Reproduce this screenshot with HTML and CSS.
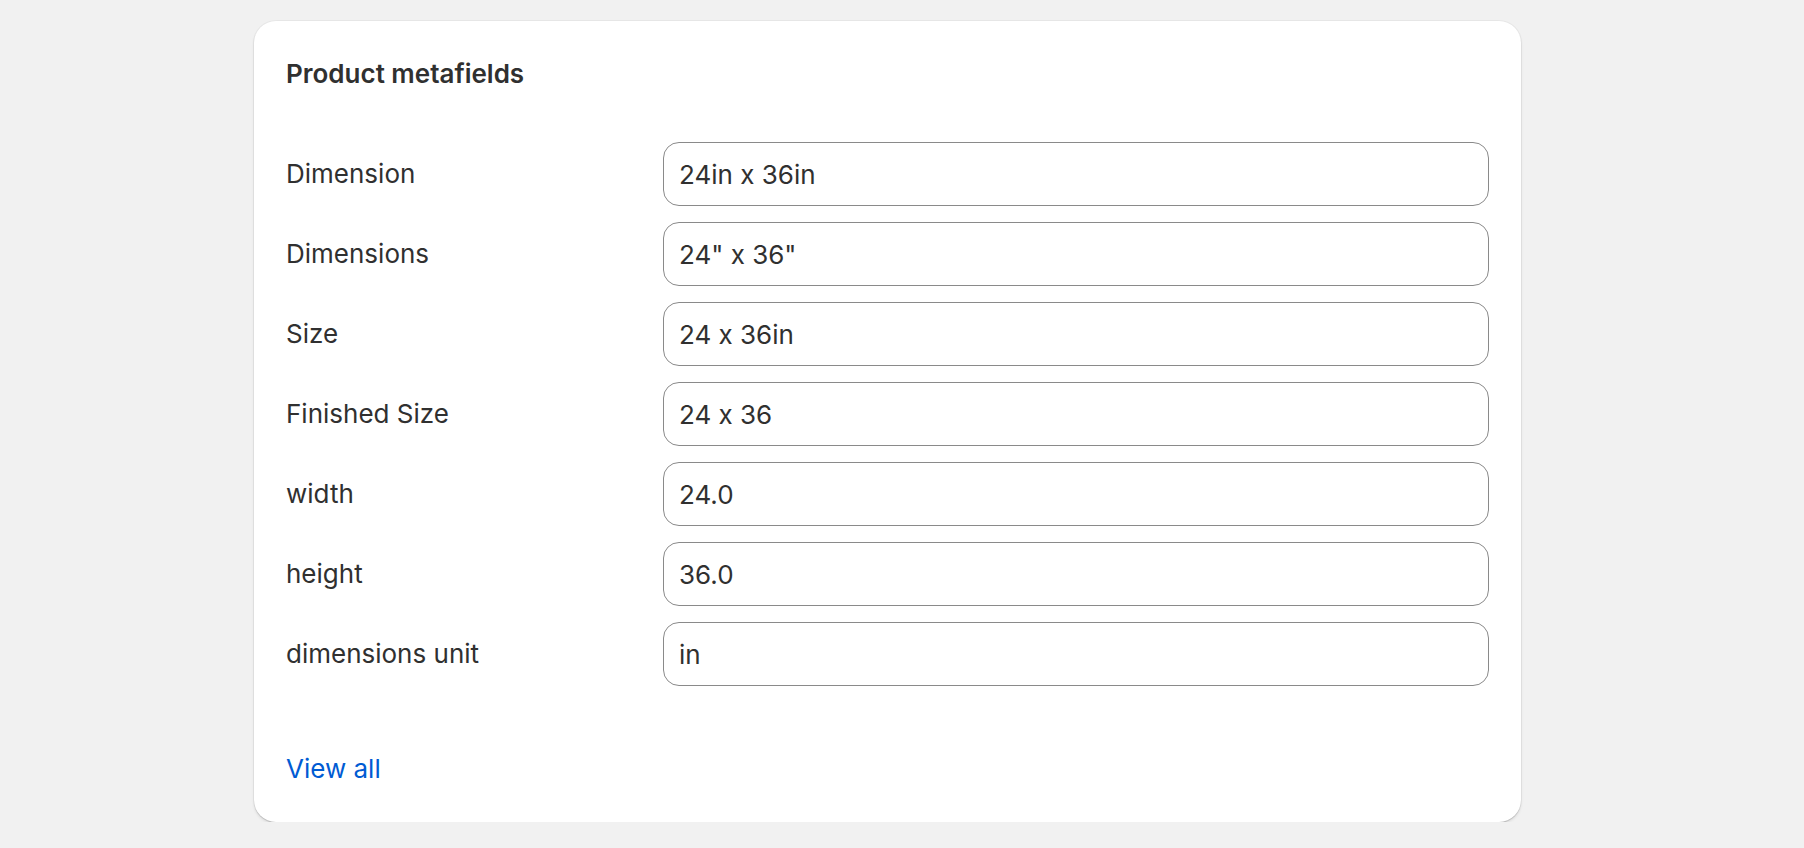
FILE: index.html
```html
<!DOCTYPE html>
<html>
<head>
<meta charset="utf-8">
<link rel="stylesheet" href="styles.css">
</head>
<body>
<div class="page">
  <section class="card">
    <h2 class="card-title">Product metafields</h2>
    <div class="fields">
      <div class="field"><span class="label">Dimension</span><div class="input">24in x 36in</div></div>
      <div class="field"><span class="label">Dimensions</span><div class="input">24" x 36"</div></div>
      <div class="field"><span class="label">Size</span><div class="input">24 x 36in</div></div>
      <div class="field"><span class="label">Finished Size</span><div class="input">24 x 36</div></div>
      <div class="field"><span class="label">width</span><div class="input">24.0</div></div>
      <div class="field"><span class="label">height</span><div class="input">36.0</div></div>
      <div class="field"><span class="label">dimensions unit</span><div class="input">in</div></div>
    </div>
    <a class="view-all" href="#">View all</a>
  </section>
</div>
</body>
</html>
```

FILE: styles.css
```css
html, body {
  margin: 0;
  padding: 0;
  background: #f1f1f1;
}
body {
  font-family: Inter, "Noto Sans", sans-serif;
  font-feature-settings: "calt" 0;
  color: #303030;
  font-size: 26px;
}
.page {
  padding: 21px 0 0 254px;
}
.card {
  width: 1267px;
  box-sizing: border-box;
  background: #ffffff;
  border-radius: 22px;
  padding: 33px 32px 33px 32px;
  box-shadow: 0 0 0 1px rgba(0, 0, 0, 0.04), 0 1px 0 0 rgba(0, 0, 0, 0.1), 0 2px 3px rgba(0, 0, 0, 0.1);
  display: flex;
  flex-direction: column;
}
.card-title {
  margin: 0 0 48px 0;
  font-size: 26px;
  line-height: 40px;
  font-weight: 600;
  color: #303030;
}
.fields {
  display: flex;
  flex-direction: column;
  gap: 16px;
}
.field {
  display: grid;
  grid-template-columns: 377px 1fr;
  align-items: center;
}
.label {
  font-size: 26px;
  line-height: 40px;
}
.input {
  height: 64px;
  box-sizing: border-box;
  border: 1px solid #8a8a8a;
  border-radius: 16px;
  padding: 0 15px;
  display: flex;
  align-items: center;
  font-size: 26px;
  color: #303030;
}
.view-all {
  margin-top: 63px;
  align-self: flex-start;
  font-size: 26px;
  line-height: 40px;
  color: #005bd3;
  text-decoration: none;
}
```
